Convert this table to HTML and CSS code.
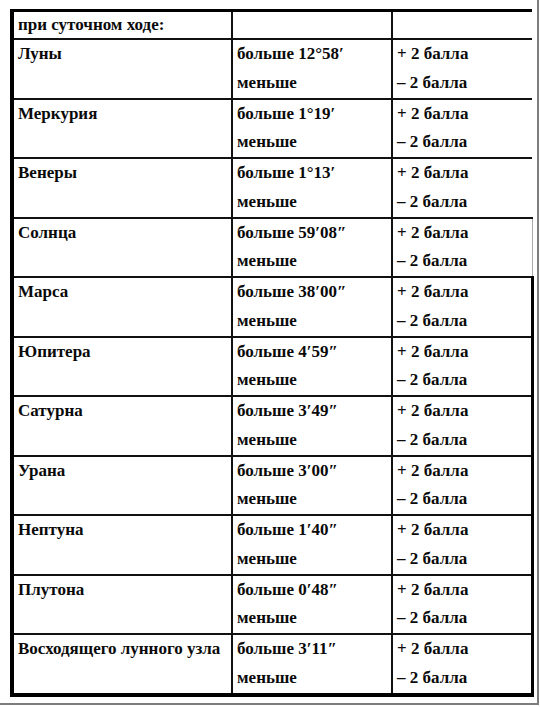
FILE: index.html
```html
<!DOCTYPE html>
<html lang="ru">
<head>
<meta charset="utf-8">
<link rel="stylesheet" href="styles.css">
</head>
<body>
<div class="page">
<table class="tbl">
  <colgroup><col class="c1"><col class="c2"><col class="c3"></colgroup>
  <tr class="head"><td>при суточном ходе:</td><td></td><td></td></tr>
  <tr><td>Луны</td><td>больше 12°58′<br>меньше</td><td>+ 2 балла<br>– 2 балла</td></tr>
  <tr><td>Меркурия</td><td>больше 1°19′<br>меньше</td><td>+ 2 балла<br>– 2 балла</td></tr>
  <tr><td>Венеры</td><td>больше 1°13′<br>меньше</td><td>+ 2 балла<br>– 2 балла</td></tr>
  <tr><td>Солнца</td><td>больше 59′08″<br>меньше</td><td class="edge-faint">+ 2 балла<br>– 2 балла</td></tr>
  <tr><td>Марса</td><td>больше 38′00″<br>меньше</td><td class="edge">+ 2 балла<br>– 2 балла</td></tr>
  <tr><td>Юпитера</td><td>больше 4′59″<br>меньше</td><td class="edge">+ 2 балла<br>– 2 балла</td></tr>
  <tr><td>Сатурна</td><td>больше 3′49″<br>меньше</td><td class="edge">+ 2 балла<br>– 2 балла</td></tr>
  <tr><td>Урана</td><td>больше 3′00″<br>меньше</td><td class="edge">+ 2 балла<br>– 2 балла</td></tr>
  <tr><td>Нептуна</td><td>больше 1′40″<br>меньше</td><td class="edge">+ 2 балла<br>– 2 балла</td></tr>
  <tr><td>Плутона</td><td>больше 0′48″<br>меньше</td><td class="edge">+ 2 балла<br>– 2 балла</td></tr>
  <tr class="last"><td>Восходящего лунного узла</td><td>больше 3′11″<br>меньше</td><td class="edge">+ 2 балла<br>– 2 балла</td></tr>
</table>
</div>
</body>
</html>
```

FILE: styles.css
```css
html, body {
  margin: 0;
  padding: 0;
  background: #fff;
}
.page {
  box-sizing: border-box;
  width: 539px;
  height: 705px;
  padding: 9px 0 0 10px;
  border-right: 2px solid #7c7c7c;
  border-bottom: 2px solid #7c7c7c;
}
.tbl {
  border-collapse: collapse;
  table-layout: fixed;
  width: 520px;
  font-family: "Liberation Serif", "Times New Roman", serif;
  font-size: 17px;
  color: #0a0a0a;
  font-weight: bold;
  border-top: 3px solid #000;
  border-left: 4px solid #000;
  border-bottom: 4px solid #000;
}
.c1 { width: 220px; }
.c2 { width: 160px; }
.c3 { width: 140px; }
.tbl td {
  vertical-align: top;
  padding: 0 0 0 4px;
  line-height: 28.5px;
  height: 57.5px;
  border-top: 2px solid #111;
  border-bottom: 2px solid #111;
  border-left: 2px solid #111;
  white-space: nowrap;
}
.tbl tr.head td {
  height: 26px;
  line-height: 26px;
  border-top: 3px solid #000;
}
.tbl td:first-child {
  border-left: 4px solid #000;
}
.tbl tr.last td {
  border-bottom: 4px solid #000;
}
.tbl td.edge {
  border-right: 3px solid #000;
}
.tbl td.edge-faint {
  border-right: 1px solid #aaa;
}
```
